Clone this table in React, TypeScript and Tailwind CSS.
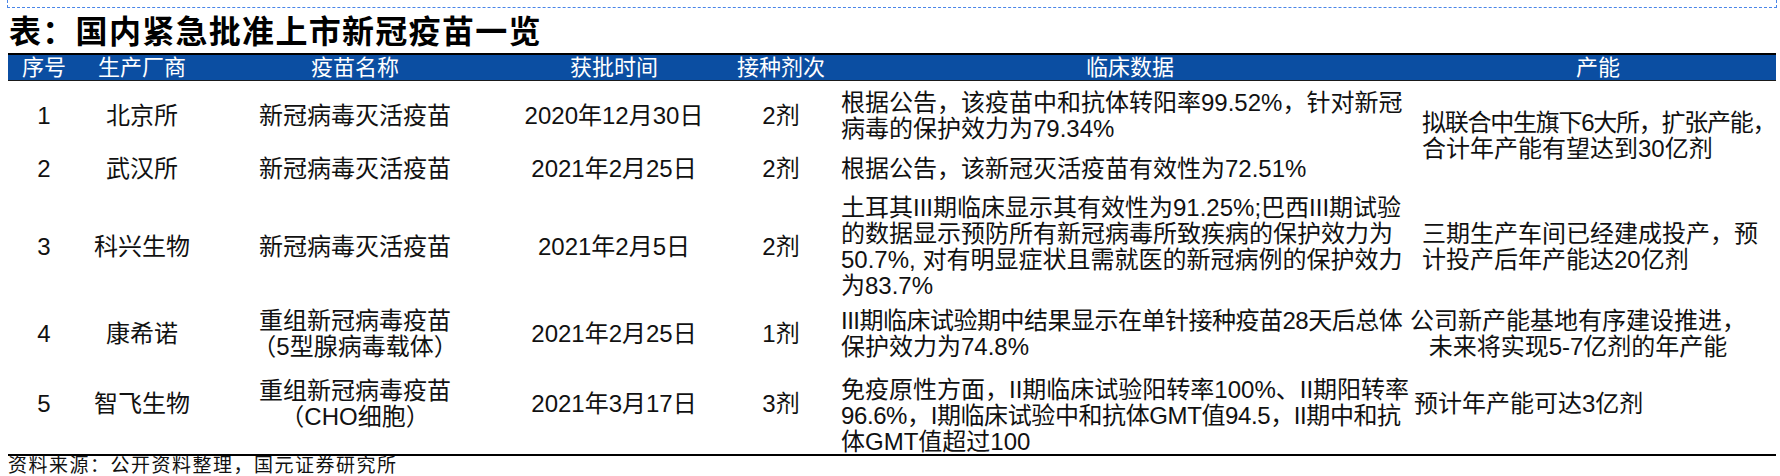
import type { ReactNode } from 'react'

type Row = {
  no: string
  maker: string
  name: string[]
  date: string
  dose: string
  clinical: ReactNode[]
  clinClass?: string
  capacity?: ReactNode
  capClass?: string
  cellClass?: string
}

const rows: Row[] = [
  {
    no: '1',
    maker: '北京所',
    name: ['新冠病毒灭活疫苗'],
    date: '2020年12月30日',
    dose: '2剂',
    clinical: ['根据公告，该疫苗中和抗体转阳率99.52%，针对新冠', '病毒的保护效力为79.34%'],
    capacity: (
      <>
        <div className="tracking-[-1.25px]">拟联合中生旗下6大所，扩张产能，</div>
        <div>合计年产能有望达到30亿剂</div>
      </>
    ),
    capClass: 'row-span-2 justify-center pl-[2px] pt-[4px]',
  },
  {
    no: '2',
    maker: '武汉所',
    name: ['新冠病毒灭活疫苗'],
    date: '2021年2月25日',
    dose: '2剂',
    clinical: ['根据公告，该新冠灭活疫苗有效性为72.51%'],
  },
  {
    no: '3',
    maker: '科兴生物',
    name: ['新冠病毒灭活疫苗'],
    date: '2021年2月5日',
    dose: '2剂',
    clinical: [
      '土耳其III期临床显示其有效性为91.25%;巴西III期试验',
      '的数据显示预防所有新冠病毒所致疾病的保护效力为',
      '50.7%, 对有明显症状且需就医的新冠病例的保护效力',
      '为83.7%',
    ],
    capacity: (
      <>
        <div>三期生产车间已经建成投产，预</div>
        <div>计投产后年产能达20亿剂</div>
      </>
    ),
    capClass: 'justify-center pl-[2px]',
  },
  {
    no: '4',
    maker: '康希诺',
    name: ['重组新冠病毒疫苗', '（5型腺病毒载体）'],
    date: '2021年2月25日',
    dose: '1剂',
    clinical: [
      <span className="tracking-[-0.5px]">III期临床试验期中结果显示在单针接种疫苗28天后总体</span>,
      '保护效力为74.8%',
    ],
    capacity: (
      <>
        <div>公司新产能基地有序建设推进，</div>
        <div>未来将实现5-7亿剂的年产能</div>
      </>
    ),
    capClass: 'justify-center items-center pr-[40px]',
  },
  {
    no: '5',
    maker: '智飞生物',
    name: ['重组新冠病毒疫苗', '（CHO细胞）'],
    date: '2021年3月17日',
    dose: '3剂',
    clinical: [
      '免疫原性方面，II期临床试验阳转率100%、II期阳转率',
      <span className="tracking-[-0.4px]">96.6%，I期临床试验中和抗体GMT值94.5，II期中和抗</span>,
      '体GMT值超过100',
    ],
    clinClass: 'justify-start pt-[15px]',
    capacity: <div>预计年产能可达3亿剂</div>,
    capClass: 'justify-center -ml-[6px] pb-[9px]',
    cellClass: 'pb-[9px]',
  },
]

const cols = 'grid grid-cols-[72px_124px_302px_216px_118px_580px_356px]'

export default function App() {
  return (
    <div className="w-[1780px] h-[476px] bg-white overflow-hidden text-[#111] font-['Liberation_Sans','Noto_Sans_CJK_SC',sans-serif]">
      <div className="ml-[7px] mr-[3px] h-[8px] border-x border-b border-dashed border-[#4a86e8]" />

      <div className="h-[45px] pl-[9px] pt-[2px] flex items-center text-[32px] font-bold leading-none tracking-[1.3px] text-black">
        表：国内紧急批准上市新冠疫苗一览
      </div>

      <div className="ml-[8px] w-[1768px] border-t-2 border-black">
        <div className={`${cols} h-[26px] items-center bg-[#0b4ea2] border-b border-[#1a1a1a] text-white text-[22px] leading-none`}>
          <div className="text-center">序号</div>
          <div className="text-center">生产厂商</div>
          <div className="text-center">疫苗名称</div>
          <div className="text-center">获批时间</div>
          <div className="text-center">接种剂次</div>
          <div className="text-center">临床数据</div>
          <div className="text-center">产能</div>
        </div>

        <div className={`${cols} grid-rows-[70px_36px_119px_56px_92px] border-b-2 border-black text-[24px] leading-[26px]`}>
          {rows.map(r => (
            <Cells key={r.no} r={r} />
          ))}
        </div>
      </div>

      <div className="pl-[8px] text-[19px] leading-[20px] tracking-[1.5px]">资料来源：公开资料整理，国元证券研究所</div>
    </div>
  )
}

function Cells({ r }: { r: Row }) {
  const c = r.cellClass ?? ''
  return (
    <>
      <div className={`flex items-center justify-center ${c}`}>{r.no}</div>
      <div className={`flex items-center justify-center ${c}`}>{r.maker}</div>
      <div className={`flex flex-col items-center justify-center ${c}`}>
        {r.name.map(n => (
          <div key={n}>{n}</div>
        ))}
      </div>
      <div className={`flex items-center justify-center ${c}`}>{r.date}</div>
      <div className={`flex items-center justify-center ${c}`}>{r.dose}</div>
      <div className={`flex flex-col pl-px whitespace-nowrap ${r.clinClass ?? 'justify-center'}`}>
        {r.clinical.map((line, i) => (
          <div key={i}>{line}</div>
        ))}
      </div>
      {r.capacity && <div className={`flex flex-col whitespace-nowrap ${r.capClass ?? ''}`}>{r.capacity}</div>}
    </>
  )
}
